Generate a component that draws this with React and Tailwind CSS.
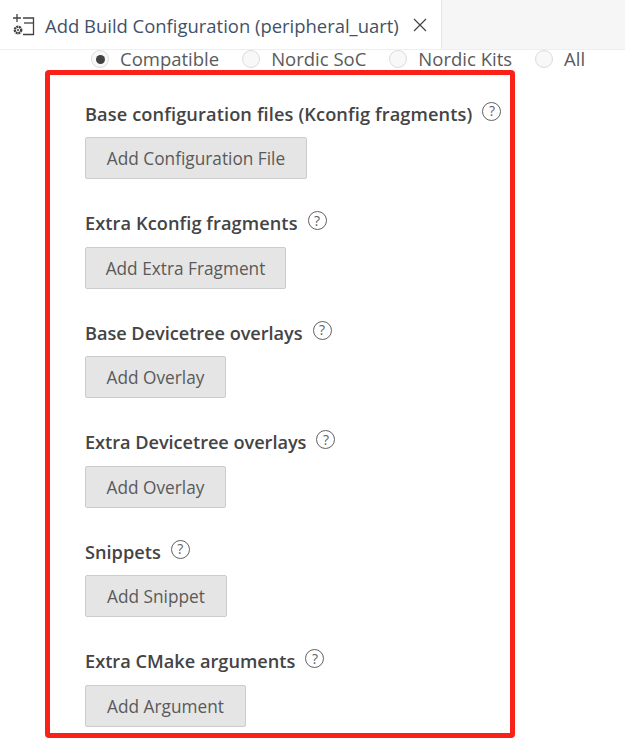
import React from 'react';

const sections = [
    { title: 'Base configuration files (Kconfig fragments)', button: 'Add Configuration File', w: 'w-[222px]', track: 'tracking-[0.12px]' },
    { title: 'Extra Kconfig fragments', button: 'Add Extra Fragment', w: 'w-[201px]', track: 'tracking-[0.08px]' },
    { title: 'Base Devicetree overlays', button: 'Add Overlay', w: 'w-[141px]', track: 'tracking-[-0.05px]' },
    { title: 'Extra Devicetree overlays', button: 'Add Overlay', w: 'w-[141px]', track: 'tracking-[-0.05px]' },
    { title: 'Snippets', button: 'Add Snippet', w: 'w-[142px]', track: 'tracking-normal' },
    { title: 'Extra CMake arguments', button: 'Add Argument', w: 'w-[161px]', track: 'tracking-normal' },
];

const radios = [
    { label: 'Compatible', checked: true },
    { label: 'Nordic SoC' },
    { label: 'Nordic Kits' },
    { label: 'All' },
];

const TabIcon = () => (
    <svg width="24" height="24" viewBox="0 0 24 24" fill="none" stroke="#424242" strokeWidth="1.3">
        <path d="M6 1v8M2 5h8" />
        <path d="M12 5h10.5v16.5H12" />
        <path d="M13 10h9" />
        <circle cx="7" cy="17" r="3.2" strokeWidth="2.4" strokeDasharray="2 0.6" />
        <circle cx="7" cy="17" r="1" fill="#424242" stroke="none" />
    </svg>
);

const HelpIcon = () => (
    <span className="ml-[10px] mt-[-6px] flex h-[19px] w-[19px] items-center justify-center rounded-full border border-[#616161] text-[14px] leading-none text-[#616161]">
        ?
    </span>
);

const Radio = ({ label, checked }) => (
    <div className="flex items-center">
        <span className="flex h-[18px] w-[18px] items-center justify-center rounded-full border border-[#dcdcdc] bg-[#f8f8f8]">
            {checked && <span className="h-[9px] w-[9px] rounded-full bg-[#424242]" />}
        </span>
        <span className="ml-[11px] text-[18.5px] leading-[24px] text-[#5a5a5a]">{label}</span>
    </div>
);

const App = () => {
    return (
        <div className="h-[750px] w-[625px] overflow-hidden bg-white font-['Open_Sans',sans-serif]">
            <div className="flex h-[50px] border-b border-[#eeeeee]">
                <div className="flex h-[50px] w-[441px] items-center pl-[11px]">
                    <TabIcon />
                    <span className="ml-[10px] pt-[2px] text-[18.45px] text-[#3f5268]">Add Build Configuration (peripheral_uart)</span>
                    <svg className="ml-[14px]" width="14" height="14" viewBox="0 0 14 14" stroke="#424242" strokeWidth="1.2">
                        <path d="M1 1l12 12M13 1L1 13" />
                    </svg>
                </div>
                <div className="flex-1 border-l border-[#e5e5e5] bg-[#f6f6f6]" />
            </div>
            <div className="ml-[91px] flex h-[20px] items-center gap-[23px] pb-[2px]">
                {radios.map((r) => (
                    <Radio key={r.label} label={r.label} checked={r.checked} />
                ))}
            </div>
            <div className="ml-[45px] h-[668px] w-[470px] rounded-[4px] border-[5px] border-[#fa2118] pl-[35px] pt-[24px]">
                {sections.map((s) => (
                    <div key={s.title} className="mb-[29.5px]">
                        <div className="flex h-[30px] items-center">
                            <span className={`pt-[1px] text-[18.2px] font-semibold leading-[29.5px] text-[#444444] ${s.track}`}>{s.title}</span>
                            <HelpIcon />
                        </div>
                        <button className={`mt-[8px] block h-[42px] rounded-[2px] border border-[#cccccc] bg-[#e5e5e5] pt-[2px] text-[17.25px] text-[#5a5a5a] ${s.w}`}>
                            {s.button}
                        </button>
                    </div>
                ))}
            </div>
        </div>
    );
};

export default App;
